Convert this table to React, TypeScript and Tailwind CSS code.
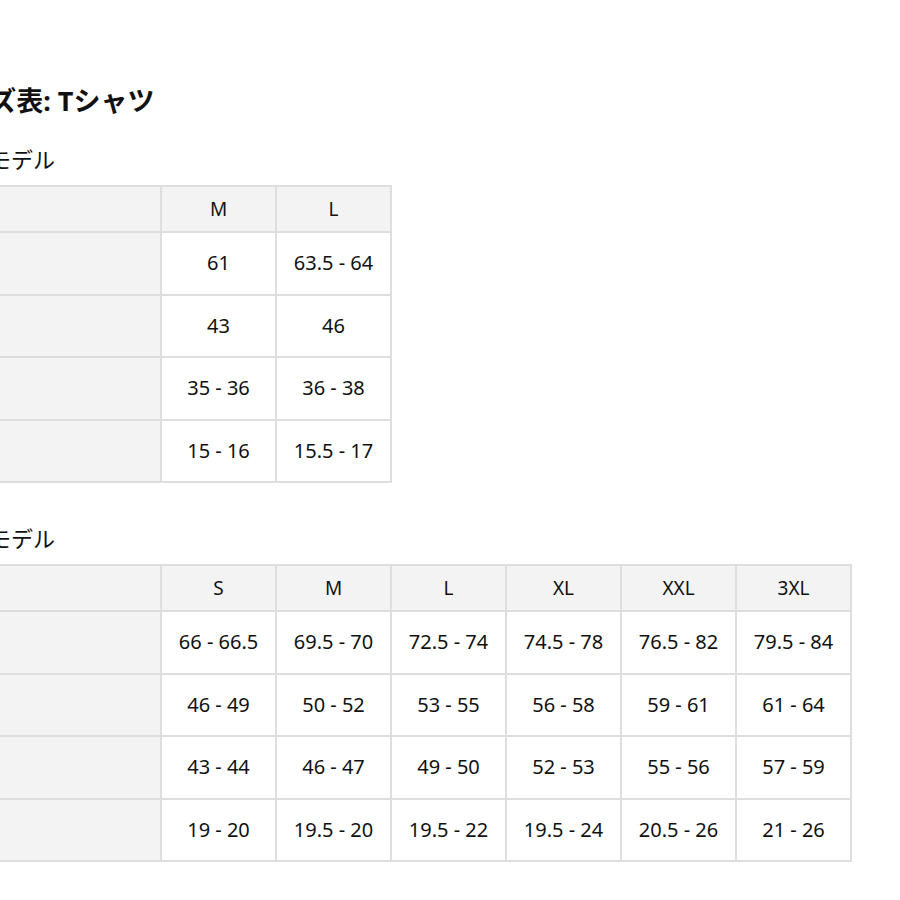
const font = { fontFamily: '"Noto Sans", "Noto Sans CJK JP", sans-serif' };

type Table = { title: string; sizes: string[]; rows: { label: string; values: string[] }[] };

const tables: Table[] = [
  {
    title: "女性モデル",
    sizes: ["M", "L"],
    rows: [
      { label: "着丈", values: ["61", "63.5 - 64"] },
      { label: "身幅", values: ["43", "46"] },
      { label: "肩幅", values: ["35 - 36", "36 - 38"] },
      { label: "袖丈", values: ["15 - 16", "15.5 - 17"] },
    ],
  },
  {
    title: "男性モデル",
    sizes: ["S", "M", "L", "XL", "XXL", "3XL"],
    rows: [
      { label: "着丈", values: ["66 - 66.5", "69.5 - 70", "72.5 - 74", "74.5 - 78", "76.5 - 82", "79.5 - 84"] },
      { label: "身幅", values: ["46 - 49", "50 - 52", "53 - 55", "56 - 58", "59 - 61", "61 - 64"] },
      { label: "肩幅", values: ["43 - 44", "46 - 47", "49 - 50", "52 - 53", "55 - 56", "57 - 59"] },
      { label: "袖丈", values: ["19 - 20", "19.5 - 20", "19.5 - 22", "19.5 - 24", "20.5 - 26", "21 - 26"] },
    ],
  },
];

function SizeTable({ t }: { t: Table }) {
  return (
    <table className="border-collapse text-[20px] text-[#111]">
      <thead>
        <tr className="h-[46px] bg-[#f3f3f3]">
          <th className="w-[215px] border-2 border-[#dedede]" />
          {t.sizes.map((s) => (
            <th key={s} className="w-[115px] border-2 border-[#dedede] text-[19px] font-normal">
              {s}
            </th>
          ))}
        </tr>
      </thead>
      <tbody>
        {t.rows.map((r) => (
          <tr key={r.label} className="h-[62.5px]">
            <td className="border-2 border-[#dedede] bg-[#f3f3f3] pl-3 text-left">{r.label}</td>
            {r.values.map((v, i) => (
              <td key={i} className="border-2 border-[#dedede] text-center">
                {v}
              </td>
            ))}
          </tr>
        ))}
      </tbody>
    </table>
  );
}

export default function App() {
  return (
    <div className="min-h-[900px] w-[900px] overflow-hidden bg-white" style={font}>
      <div className="ml-[-55px] pt-[83px]">
        <h1 className="ml-[-9px] text-[27px] font-bold leading-9 text-[#111]">サイズ表: Tシャツ</h1>
        {tables.map((t, i) => (
          <section key={t.title} className={i === 0 ? "mt-[26px]" : "mt-[41px]"}>
            <h2 className="mb-[12px] text-[22px] leading-7 text-[#111]">{t.title}</h2>
            <SizeTable t={t} />
          </section>
        ))}
      </div>
    </div>
  );
}
